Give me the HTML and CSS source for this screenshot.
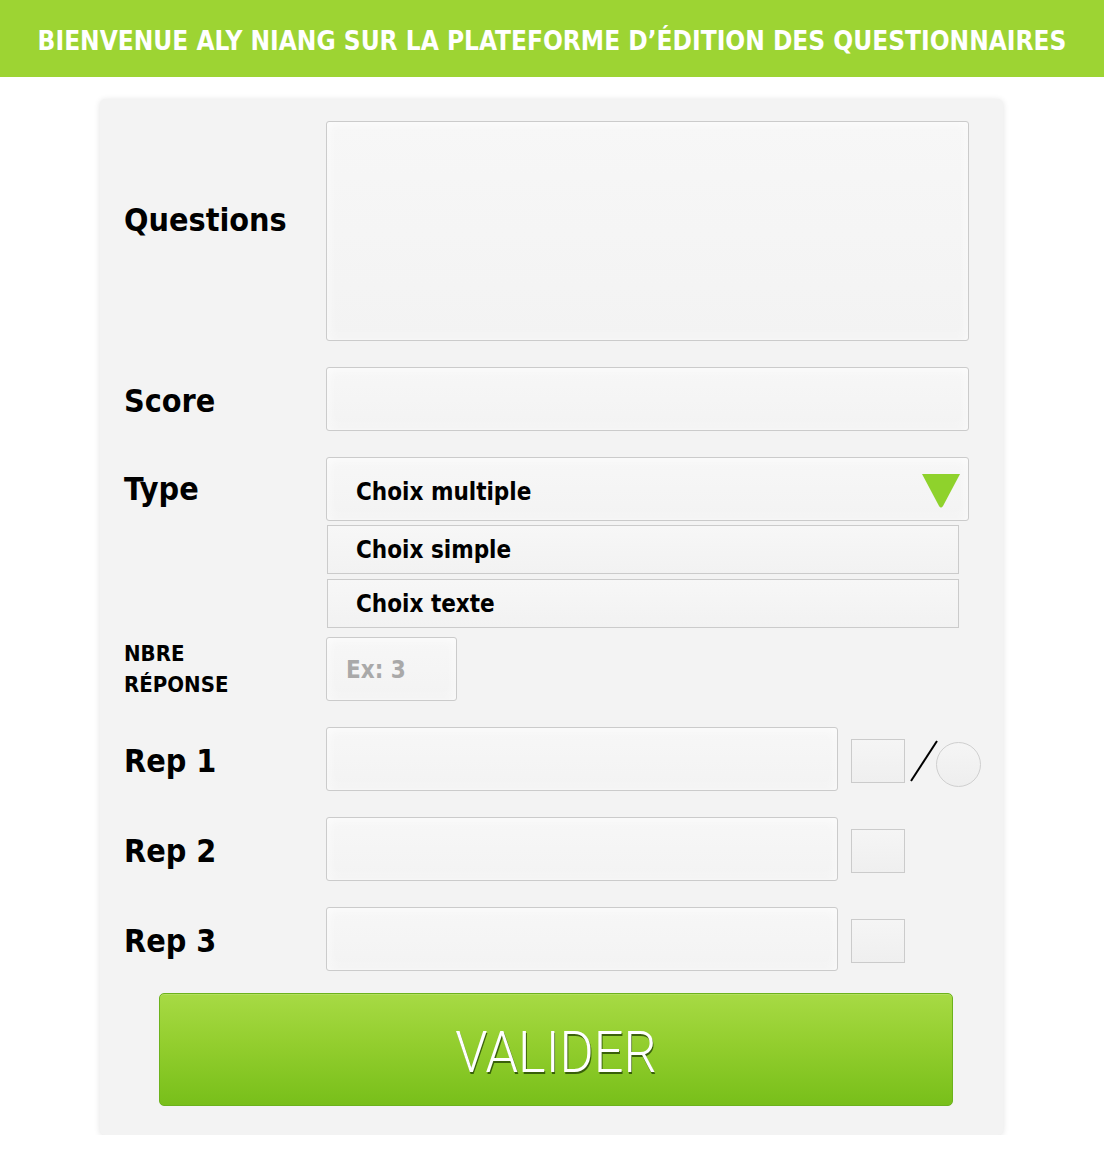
FILE: index.html
```html
<!DOCTYPE html>
<html lang="fr">
<head>
<meta charset="utf-8">
<title>Édition des questionnaires</title>
<link rel="stylesheet" href="styles.css">
</head>
<body>
<header class="topbar">
  <h1 class="topbar-title">BIENVENUE ALY NIANG SUR LA PLATEFORME D’ÉDITION DES QUESTIONNAIRES</h1>
</header>
<main class="card">
  <div class="row row-questions">
    <label class="label">Questions</label>
    <div class="field textarea"></div>
  </div>
  <div class="row">
    <label class="label label-low">Score</label>
    <div class="field input-full"></div>
  </div>
  <div class="row row-type">
    <label class="label label-top">Type</label>
    <div class="type-col">
      <div class="field select">
        <span class="select-text">Choix multiple</span>
        <svg class="select-arrow" width="40" height="35" viewBox="0 0 40 35"><path d="M1 1 H39 L22 33 Q20 36 18 33 Z" fill="#8fd22c"/></svg>
      </div>
      <div class="option">Choix simple</div>
      <div class="option">Choix texte</div>
    </div>
  </div>
  <div class="row row-nbre">
    <label class="label label-small">NBRE<br>RÉPONSE</label>
    <div class="field nbre"><span class="placeholder">Ex: 3</span></div>
  </div>
  <div class="row">
    <label class="label label-low">Rep 1</label>
    <div class="rep-line">
      <div class="field rep"></div>
      <div class="check"></div>
      <svg class="slash" width="30" height="44" viewBox="0 0 30 44"><line x1="2" y1="42" x2="28" y2="2" stroke="#000" stroke-width="2"/></svg>
      <div class="radio"></div>
    </div>
  </div>
  <div class="row">
    <label class="label label-low">Rep 2</label>
    <div class="rep-line">
      <div class="field rep"></div>
      <div class="check"></div>
    </div>
  </div>
  <div class="row row-last">
    <label class="label label-low">Rep 3</label>
    <div class="rep-line">
      <div class="field rep"></div>
      <div class="check"></div>
    </div>
  </div>
  <button class="submit"><span class="submit-text">VALIDER</span></button>
</main>
</body>
</html>
```
FILE: styles.css
```css
html, body {
  margin: 0;
  padding: 0;
  background: #ffffff;
}
body {
  font-family: "DejaVu Sans Condensed", "DejaVu Sans", sans-serif;
  color: #000;
}
.topbar {
  height: 77px;
  background: #9dd433;
  display: flex;
  align-items: center;
  justify-content: center;
}
.topbar-title {
  margin: 0;
  padding-top: 4px;
  color: #fff;
  font-size: 26px;
  font-weight: 700;
  letter-spacing: 0;
  white-space: nowrap;
}
.card {
  width: 903px;
  box-sizing: border-box;
  margin: 22px 0 0 100px;
  background: #f3f3f3;
  border-radius: 5px;
  box-shadow: 0 1px 6px rgba(0,0,0,0.12);
  padding: 22px 24px 29px;
  display: flex;
  flex-direction: column;
}
.row {
  display: flex;
  align-items: center;
  margin-bottom: 26px;
}
.row-type {
  align-items: flex-start;
  margin-bottom: 9px;
}
.row-last {
  margin-bottom: 22px;
}
.label {
  width: 202px;
  flex: none;
  font-weight: 700;
  font-size: 32px;
  line-height: 1.1;
}
.label-low {
  padding-top: 6px;
}
.row-questions .label {
  padding-bottom: 20px;
}
.label-top {
  line-height: 64px;
}
.label-small {
  font-size: 22px;
  line-height: 31px;
}
.field {
  box-sizing: border-box;
  border: 1px solid #cbcbcb;
  border-radius: 3px;
  background: linear-gradient(#f7f7f7, #f3f3f3);
  box-shadow: inset 0 0 12px rgba(255,255,255,0.9), inset 0 -3px 6px rgba(0,0,0,0.025);
}
.textarea {
  width: 643px;
  height: 220px;
}
.input-full {
  width: 643px;
  height: 64px;
}
.type-col {
  display: flex;
  flex-direction: column;
}
.select {
  width: 643px;
  height: 64px;
  display: flex;
  align-items: center;
  justify-content: space-between;
  padding: 0 7px 0 29px;
}
.select-text, .option {
  font-weight: 700;
  font-size: 24px;
}
.select-text {
  padding-top: 6px;
}
.select-arrow {
  display: block;
  margin-top: 2px;
}
.option {
  box-sizing: border-box;
  width: 632px;
  height: 49px;
  margin-left: 1px;
  margin-top: 4px;
  border: 1px solid #cbcbcb;
  background: linear-gradient(#f7f7f7, #f2f2f2);
  display: flex;
  align-items: center;
  padding-left: 28px;
  padding-top: 1px;
}
.option + .option {
  margin-top: 5px;
}
.nbre {
  width: 131px;
  height: 64px;
  display: flex;
  align-items: center;
  padding-left: 19px;
}
.placeholder {
  color: #a9a9a9;
  font-weight: 700;
  font-size: 24px;
  padding-top: 2px;
}
.rep-line {
  display: flex;
  align-items: center;
}
.rep {
  width: 512px;
  height: 64px;
}
.check {
  box-sizing: border-box;
  width: 54px;
  height: 44px;
  margin-left: 13px;
  margin-top: 4px;
  border: 1px solid #cbcbcb;
  background: linear-gradient(#f5f5f5, #efefef);
}
.slash {
  display: block;
  margin-left: 4px;
  margin-top: 4px;
}
.radio {
  box-sizing: border-box;
  width: 45px;
  height: 45px;
  margin-left: -3px;
  margin-top: 10px;
  border-radius: 50%;
  border: 1px solid #cfcfcf;
  background: linear-gradient(#f5f5f5, #eeeeee);
}
.submit {
  margin: 0 0 0 35px;
  width: 794px;
  height: 113px;
  border: 1px solid #6cb21c;
  border-radius: 5px;
  background: linear-gradient(#a7da44, #93ce2e 45%, #78bf1a);
  box-shadow: inset 0 1px 0 rgba(255,255,255,0.15);
  display: flex;
  align-items: center;
  justify-content: center;
  padding: 0;
  cursor: pointer;
}
.submit-text {
  display: inline-block;
  color: #fff;
  font-family: Roboto, "DejaVu Sans", sans-serif;
  font-weight: 300;
  font-size: 58px;
  transform: scaleX(0.9);
  text-shadow: 1px 2px 0 rgba(30,60,0,0.75);
  padding-top: 4px;
}
```
